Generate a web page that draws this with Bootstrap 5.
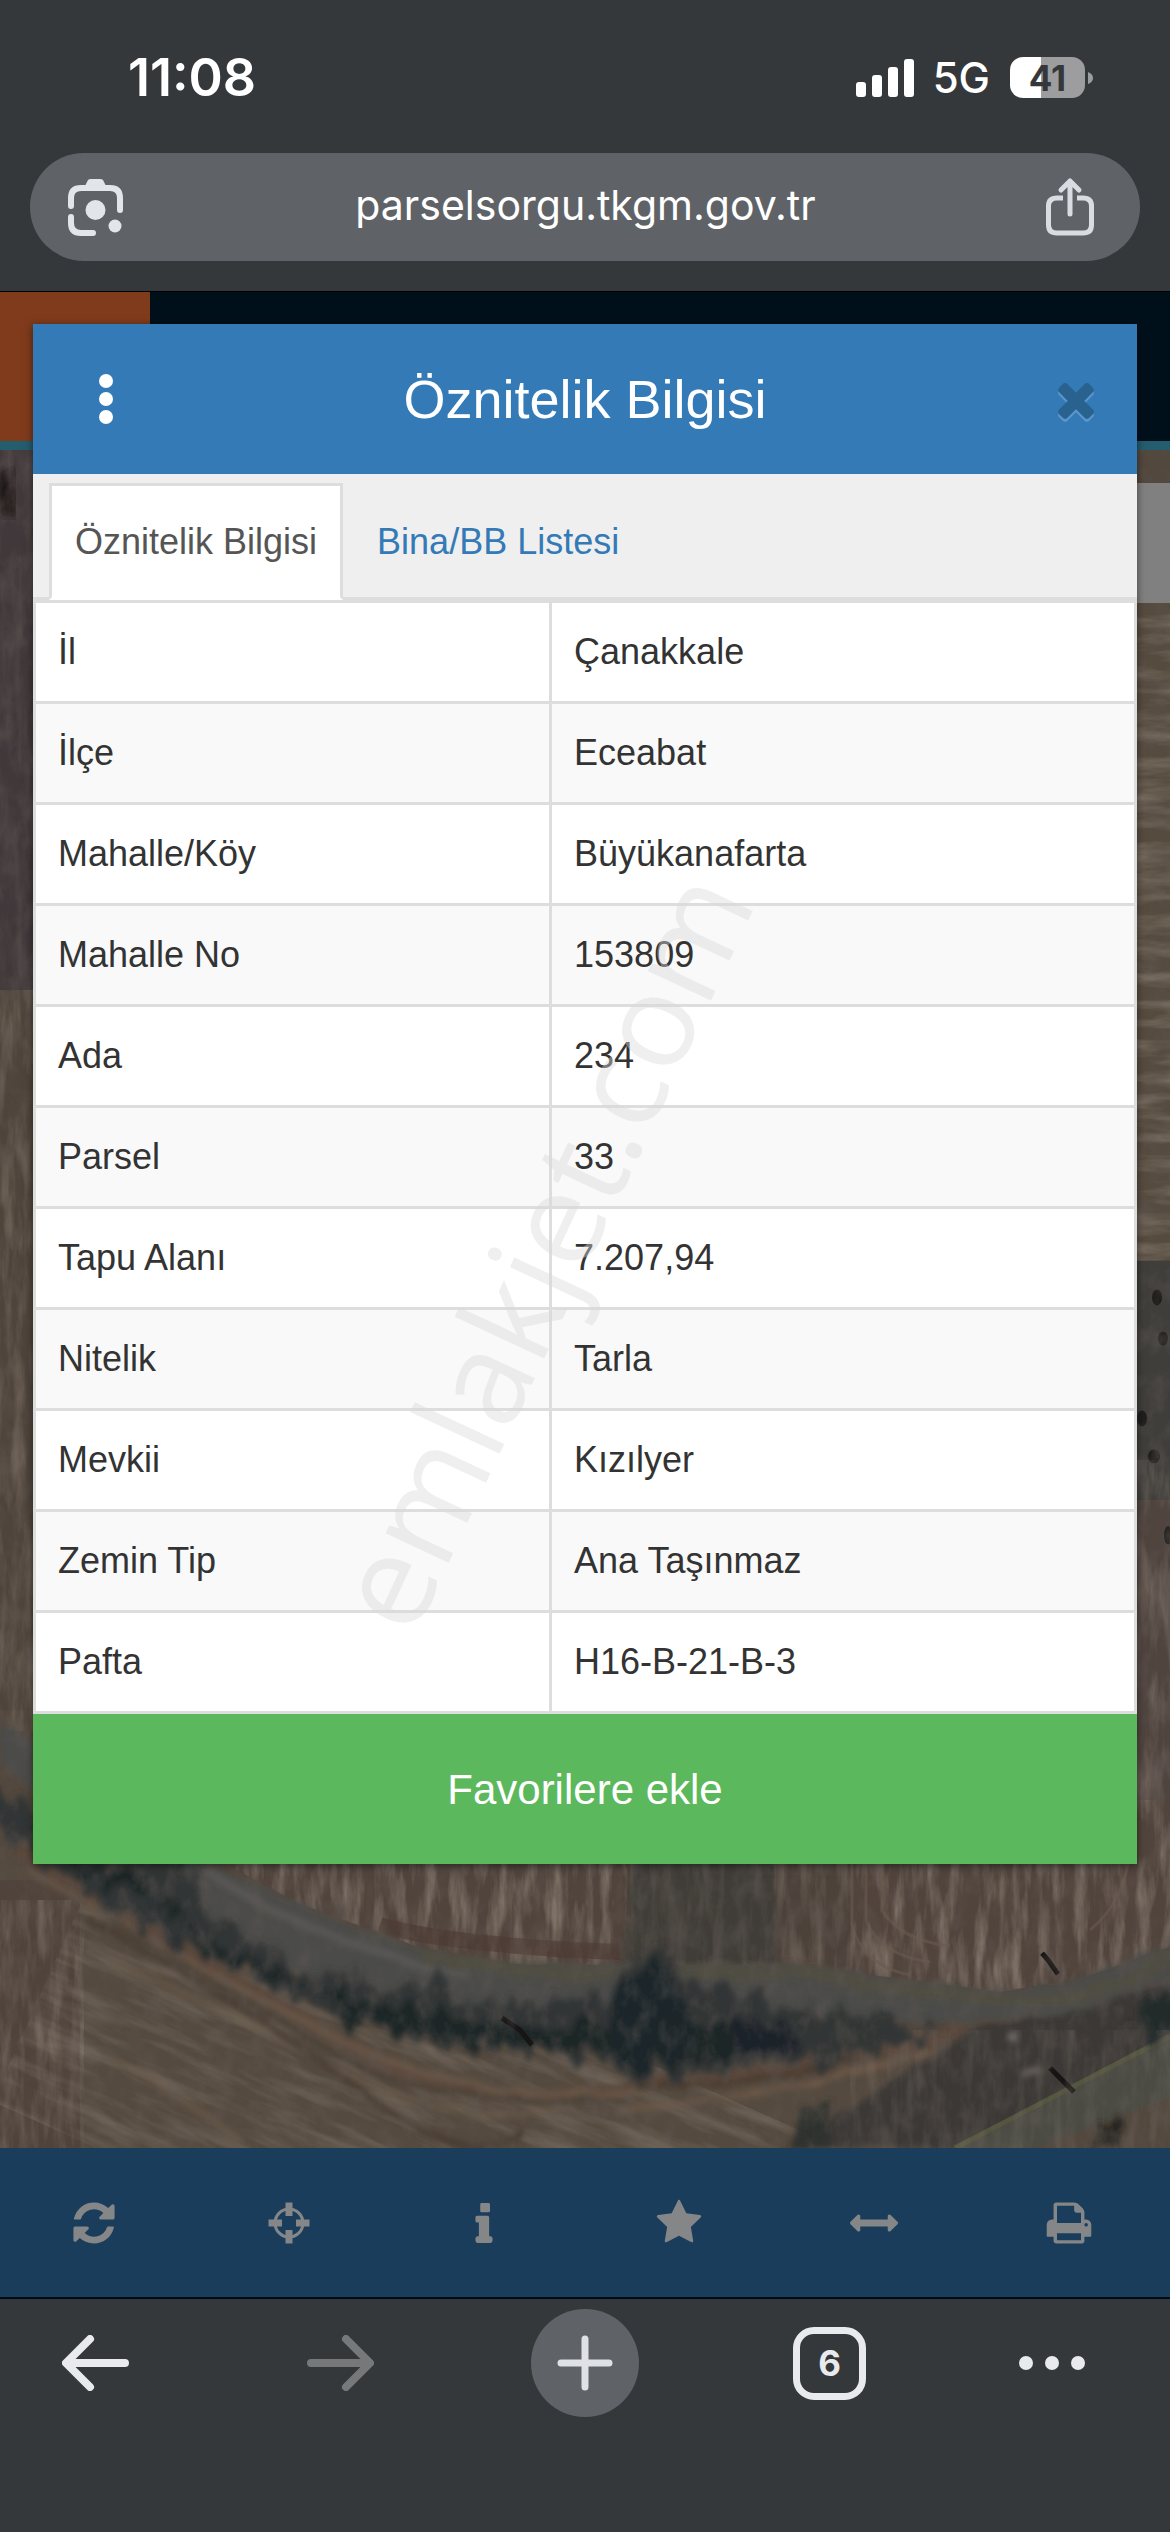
<!DOCTYPE html>
<html lang="tr">
<head>
<meta charset="utf-8">
<meta name="viewport" content="width=device-width, initial-scale=1">
<title>Parsel Sorgu - Öznitelik Bilgisi</title>
<link href="https://cdn.jsdelivr.net/npm/bootstrap@5.3.0/dist/css/bootstrap.min.css" rel="stylesheet">
<style>
  body { background: #35383b; font-family: "Liberation Sans", Arial, sans-serif; font-size: 36px; line-height: 48px; color: #333; }
  svg { display: block; flex: none; }
  .plain-btn { border: 0; padding: 0; background: none; color: inherit; display: flex; align-items: center; justify-content: center; }

  /* browser chrome */
  .phone-top, .browser-nav { font-family: Inter, sans-serif; color: #fff; }
  .status-row { height: 153px; padding: 2px 77px 0 128px; }
  .clock { font-size: 52px; font-weight: 600; }
  .net { font-size: 42px; font-weight: 500; margin: 0 20px 0 19px; }
  .battery { width: 75px; height: 41px; border-radius: 13px; font-size: 35px; font-weight: 700; color: #35383b; background: linear-gradient(90deg, #fff 42%, #9d9d9f 42%); }
  .address { height: 108px; margin: 0 30px 30px; padding: 0 45px 0 36px; border-radius: 54px; background: #5f6367; color: #e3e6e9; }
  .address input { border: 0; background: none; color: #fff; font-size: 41px; line-height: 48px; padding: 0 0 4px; text-align: center; min-width: 0; outline: 0; }

  /* page under the dialog */
  .stage { padding: 32px 33px 284px; border-top: 1px solid #000; overflow: hidden; isolation: isolate; }
  .map-art { position: absolute; inset: 0; width: 100%; height: 100%; z-index: -2; }
  .site-head { position: absolute; inset: 0 0 auto; height: 158px; z-index: -1; background: #00101a; border-bottom: 9px solid #245d6e; }
  .site-logo { width: 150px; height: 149px; background: #7f3b1b; }
  .map-control { position: absolute; right: 0; top: 191px; width: 60px; height: 120px; z-index: -1; background: #808080; }

  /* dialog */
  .dialog-box { background: #fff; box-shadow: 0 2px 8px 0 rgba(0,0,0,.5); }
  .dialog-head { height: 150px; background: #337ab7; color: #fff; }
  .dialog-head .plain-btn { width: 145px; align-self: stretch; }
  .dialog-head .close-x { justify-content: flex-end; padding-right: 34px; color: #29618f; filter: drop-shadow(0 3px 0 #5a96c9); }
  .dialog-head h1 { font-size: 54px; line-height: 60px; }
  .info-tabs { height: 126px; padding: 9px 16px 0; gap: 8px; background: #efefef; border-bottom: 3px solid #ddd; }
  .info-tabs .nav-link { height: 117px; margin-bottom: -3px; padding: 0 23px; border: 3px solid transparent; border-radius: 0; color: #337ab7; display: flex; align-items: center; }
  .info-tabs .nav-link.active { color: #555; background: #fff; border-color: #ddd #ddd #fff; }
  .info-table { border: 3px solid #ddd; border-bottom: 0; border-collapse: separate; border-spacing: 0; width: 100%; }
  .info-table th, .info-table td { height: 101px; padding: 0 22px; border-bottom: 3px solid #ddd; font-weight: 400; vertical-align: middle; }
  .info-table th { width: 47%; border-right: 3px solid #ddd; }
  .info-table tr:nth-child(even) { background: #f9f9f9; }
  .stamp { position: absolute; inset: 0; padding: 184px 90px 0 0; display: flex; align-items: center; justify-content: center; pointer-events: none; overflow: hidden; font-family: "Open Sans", sans-serif; font-size: 130px; color: rgba(216,216,216,.42); }
  .stamp span { transform: rotate(-65deg); }
  .fav-btn { height: 150px; border: 0; border-radius: 0; background: #5cb85c; color: #fff; font-size: 42px; }

  /* toolbars */
  .map-tools { height: 149px; margin: 0 4px 0 -4px; }
  .tools-wrap { background: #1a3d5b; color: #848688; border-bottom: 2px solid #000a1a; }
  .browser-nav { display: grid; grid-template-columns: 191fr 298fr 192fr 297fr 148fr 44fr; padding: 10px 0 115px; color: #e8eaed; }
  .new-tab { width: 108px; height: 108px; border-radius: 50%; background: #5f6367; color: #dfe1e5; }
  .tab-count { width: 73px; height: 73px; border: 7px solid #e8eaed; border-radius: 21px; font-size: 35px; font-weight: 700; }
</style>
<script src="https://cdn.jsdelivr.net/npm/bootstrap@5.3.0/dist/js/bootstrap.bundle.min.js"></script>
</head>
<body class="d-flex flex-column min-vh-100">

<header class="phone-top">
  <div class="status-row d-flex align-items-center">
    <span class="clock me-auto">11:08</span>
    <svg width="58" height="38" viewBox="0 0 58 38" fill="#fff"><rect y="23" width="10" height="15" rx="3"/><rect x="16" y="16" width="10" height="22" rx="3"/><rect x="32" y="8" width="10" height="30" rx="3"/><rect x="48" width="10" height="38" rx="3"/></svg>
    <span class="net">5G</span>
    <span class="battery d-flex align-items-center justify-content-center">41</span>
    <svg width="8" height="12" viewBox="0 0 8 12"><path d="M3 0Q8 2 8 6T3 12Z" fill="#9d9d9f"/></svg>
  </div>
  <div class="address d-flex align-items-center">
    <button class="plain-btn" aria-label="Google Lens">
      <svg width="60" height="60" viewBox="0 0 60 60" fill="none" stroke="#e3e6e9" stroke-width="6"><path d="M5 29V21Q5 11 15 11H44Q54 11 54 21V33" stroke-linecap="round"/><path d="M5 40V46Q5 56 15 56H27" stroke-linecap="round"/><path d="M18 11L22 3Q23 2 25 2H34Q36 2 37 3L41 11Z" fill="#e3e6e9" stroke="none"/><circle cx="29.500" cy="33" r="10" fill="#e3e6e9" stroke="none"/><circle cx="49" cy="49" r="6.500" fill="#e3e6e9" stroke="none"/></svg>
    </button>
    <input class="flex-grow-1" type="text" aria-label="Adres" value="parselsorgu.tkgm.gov.tr">
    <button class="plain-btn" aria-label="Paylaş">
      <svg width="50" height="60" viewBox="0 0 50 60" fill="none" stroke="#d9dce3" stroke-width="5" stroke-linecap="round" stroke-linejoin="round"><path d="M25 37V5M16 13L25 4L34 13"/><path stroke-linecap="butt" d="M18 21H12Q3.500 21 3.500 29V48Q3.500 56 12 56H38Q46.500 56 46.500 48V29Q46.500 21 38 21H32"/></svg>
    </button>
  </div>
</header>

<main class="stage position-relative">
  <svg class="map-art" viewBox="0 291 1170 1857" preserveAspectRatio="none" aria-hidden="true">
    <defs>
      <filter id="grainV" x="0" y="0" width="1" height="1"><feTurbulence type="fractalNoise" baseFrequency=".08 .016" numOctaves="5" seed="4"/><feColorMatrix values="0 0 0 0 .46  0 0 0 0 .39  0 0 0 0 .33  2.400 0 0 0 -1.000"/></filter>
      <filter id="grainH" x="0" y="0" width="1" height="1"><feTurbulence type="fractalNoise" baseFrequency=".012 .07" numOctaves="5" seed="9"/><feColorMatrix values="0 0 0 0 .46  0 0 0 0 .39  0 0 0 0 .33  2.400 0 0 0 -1.000"/></filter>
      <filter id="speck" x="0" y="0" width="1" height="1"><feTurbulence type="fractalNoise" baseFrequency=".06 .04" numOctaves="5" seed="2"/><feColorMatrix values="0 0 0 0 .12  0 0 0 0 .1  0 0 0 0 .09  2.400 0 0 0 -1.050"/></filter>
      <filter id="leaf" x="-.1" y="-.2" width="1.200" height="1.400"><feTurbulence type="fractalNoise" baseFrequency=".06 .018" numOctaves="3" seed="7" result="n"/><feDisplacementMap in="SourceGraphic" in2="n" scale="48" xChannelSelector="R" yChannelSelector="G"/><feGaussianBlur stdDeviation="3"/></filter>
      <filter id="soft"><feTurbulence type="fractalNoise" baseFrequency=".03" numOctaves="3" seed="3" result="n"/><feDisplacementMap in="SourceGraphic" in2="n" scale="12"/><feGaussianBlur stdDeviation="3"/></filter>
      <clipPath id="upper"><path d="M200 1850L298 1903L418 1947L522 1965H791L895 1978L1000 1992L1082 1978L1170 1947V1500H200Z"/></clipPath>
    </defs>
    <rect y="291" width="1170" height="1857" fill="#53483e"/>
    <!-- left and right margins of the map -->
    <rect y="430" width="60" height="560" fill="#40383a"/>
    <path d="M0 470h14v44H0z" fill="#1b1918" filter="url(#soft)"/>
    <rect y="990" width="60" height="720" fill="#4f443b"/>
    <rect x="1110" y="600" width="60" height="660" fill="#564b3f"/>
    <rect x="1110" y="1260" width="60" height="240" fill="#403e3b"/>
    <rect x="1110" y="1500" width="60" height="500" fill="#50443f"/>
    <g fill="#201e1d"><ellipse cx="1157" cy="1297" rx="5" ry="8"/><ellipse cx="1163" cy="1338" rx="5" ry="7"/><ellipse cx="1142" cy="1418" rx="5" ry="8"/><ellipse cx="1154" cy="1456" rx="6" ry="7"/><ellipse cx="1168" cy="1535" rx="4" ry="9"/></g>
    <rect x="1110" y="600" width="60" height="660" filter="url(#grainH)" opacity=".4"/>
    <rect y="430" width="60" height="560" filter="url(#grainV)" opacity=".12"/>
    <rect y="990" width="60" height="740" filter="url(#grainV)" opacity=".3"/>
    <rect x="1110" y="1460" width="60" height="440" filter="url(#grainV)" opacity=".3"/>
    <!-- southern field with plough lines -->
    <path d="M0 1790L119 1913L276 1980L343 2023L590 2053L716 2067L940 2030L1000 2010L900 2100L780 2148H0Z" fill="#554a3f"/>
    <path d="M0 1880H80V2148H0Z" fill="#50433b"/>
    <rect y="1900" width="84" height="248" filter="url(#grainV)" opacity=".3"/>
    <g transform="rotate(24 84 1900)"><rect x="84" y="1820" width="900" height="300" filter="url(#grainH)" opacity=".25"/></g>
    <g fill="none" stroke-linecap="round" filter="url(#soft)">
      <path d="M20 1850Q200 1960 340 2040T640 2085Q800 2075 960 2030" stroke="#5c4a3e" stroke-width="14"/>
      <path d="M30 1870Q180 1960 330 2035T640 2090" stroke="#6e5c4c" stroke-width="4"/>
      <path d="M110 1960Q230 2010 340 2070T560 2110" stroke="#6b5b4b" stroke-width="4"/>
      <path d="M90 1920Q240 2000 360 2090T520 2130" stroke="#463b32" stroke-width="6"/>
      <path d="M110 1920Q230 1990 330 2050T620 2100" stroke="#4a3f36" stroke-width="5"/>
      <path d="M110 2060Q160 2080 240 2140" stroke="#6b5b4b" stroke-width="4"/>
      <path d="M640 2088Q760 2082 860 2058" stroke="#493a2f" stroke-width="6"/>
      <path d="M620 2110Q760 2100 930 2050" stroke="#6f5a49" stroke-width="5"/>
    </g>
    <!-- fields north of the road -->
    <g clip-path="url(#upper)">
      <rect x="200" y="1800" width="970" height="200" fill="#51443c"/>
      <rect x="200" y="1800" width="970" height="200" filter="url(#grainV)" opacity=".45"/>
      <path d="M640 1800H776V1965H622Z" fill="#413c39" filter="url(#soft)"/>
      <path d="M776 1800H850V1985H776Z" fill="#4c413a" opacity=".7"/>
      <path d="M640 1855H850V1970H625Z" filter="url(#grainV)" opacity=".15"/>
      <path d="M852 1850V1925Q862 1965 910 1975M866 1850V1920Q880 1955 930 1962M882 1850V1910Q900 1940 950 1946M1130 1850Q1126 1900 1090 1930" fill="none" stroke="#6b5a4e" stroke-width="3" opacity=".6"/>
      <path d="M380 1925Q450 1945 620 1952" fill="none" stroke="#4b3932" stroke-width="16" opacity=".6"/>
    </g>
    <!-- scrub and lane in the south east -->
    <path d="M790 2148L895 2080L970 2030L1067 2008L1170 1983V2040L1080 2085L970 2148Z" fill="#3b3734" filter="url(#soft)"/>
    <path d="M955 2150L1170 2036V2098L1030 2150Z" fill="#4b4b43"/>
    <path d="M955 2148L1170 2036" stroke="#54553f" stroke-width="5"/>
    <path d="M790 2148L800 2110L832 2100L828 2148Z" fill="#2f332e" filter="url(#soft)"/>
    <g fill="#22241f" filter="url(#leaf)"><ellipse cx="1108" cy="2132" rx="12" ry="16"/><path d="M1140 2000L1180 1985V2040L1140 2050Z" fill="#232a29"/></g>
    <rect x="850" y="2030" width="320" height="118" filter="url(#grainV)" opacity=".15"/>
    <!-- road -->
    <path d="M0 1722L33 1740L200 1860L298 1903Q360 1930 418 1947T522 1965H791L895 1978L1000 1992L1082 1978L1170 1947V1983L1067 2012L970 2023L821 2022H552L418 2010L336 1985L194 1940L130 1880L33 1790L0 1762Z" fill="#4c4b48" filter="url(#soft)"/>
    <path d="M205 1868Q250 1905 330 1935T470 1975" fill="none" stroke="#5d5c5a" stroke-width="8" opacity=".8" filter="url(#soft)"/>
    <path d="M420 1955Q500 1975 640 1973H800Q900 1990 1000 2000T1170 1955" fill="none" stroke="#504e43" stroke-width="14" filter="url(#soft)"/>
    <!-- tree line -->
    <g filter="url(#leaf)">
      <path d="M-20 1775L33 1808L70 1850H185L200 1905L270 1950L345 1985L362 1960L385 1990L440 1980L470 2005L560 2000L600 1996L628 1960H672L700 1990L740 1990L790 2010L900 2018L940 2035L821 2062L716 2070L627 2078L590 2056L430 2045L350 2030L276 1988L190 1955L119 1918L50 1870L-20 1810Z" fill="#303535"/>
      <path d="M60 1860L150 1900L200 1955L330 1995L352 2030L430 2040L590 2050L640 2070L800 2045L790 2025H480L350 2000L200 1940L130 1870Z" fill="#1f2626"/>
      <path d="M610 1985L650 1966L690 2000L700 2050L610 2072Z" fill="#1f2829"/>
      <path d="M730 2022H800V2050L740 2055Z" fill="#1a212a"/>
    </g>
    <path d="M502 2018L520 2030L532 2045M1042 1953L1048 1960L1058 1974M1050 2068L1074 2092" stroke="#171514" stroke-width="5" fill="none"/>
    <path d="M1010 2030l8 6-2 8-8-4zM1022 2078l14-12 6 4-16 10z" fill="#74706d" filter="url(#soft)"/>
    <rect y="440" width="1170" height="1708" filter="url(#speck)" opacity=".4"/>
  </svg>
  <div class="site-head"><div class="site-logo"></div></div>
  <div class="map-control"></div>

  <section class="dialog-box" role="dialog" aria-labelledby="dialogTitle">
    <div class="dialog-head d-flex align-items-center">
      <button class="plain-btn" aria-label="Menü"><svg width="16" height="52" viewBox="0 0 16 52" fill="#fff"><circle cx="8" cy="8" r="7"/><circle cx="8" cy="26" r="7"/><circle cx="8" cy="44" r="7"/></svg></button>
      <h1 class="flex-grow-1 text-center fw-normal mb-0" id="dialogTitle">Öznitelik Bilgisi</h1>
      <button class="plain-btn close-x" aria-label="Kapat"><svg width="54" height="54" viewBox="0 0 1792 1792" fill="currentColor"><path d="M1490 1322q0 40-28 68l-136 136q-28 28-68 28t-68-28l-294-294-294 294q-28 28-68 28t-68-28l-136-136q-28-28-28-68t28-68l294-294-294-294q-28-28-28-68t28-68l136-136q28-28 68-28t68 28l294 294 294-294q28-28 68-28t68 28l136 136q28 28 28 68t-28 68l-294 294 294 294q28 28 28 68z"/></svg></button>
    </div>
    <ul class="nav nav-tabs info-tabs">
      <li class="nav-item"><a class="nav-link active" href="#" aria-current="page">Öznitelik Bilgisi</a></li>
      <li class="nav-item"><a class="nav-link" href="#">Bina/BB Listesi</a></li>
    </ul>
    <div class="position-relative">
      <table class="info-table">
        <tbody>
          <tr><th scope="row">İl</th><td>Çanakkale</td></tr>
          <tr><th scope="row">İlçe</th><td>Eceabat</td></tr>
          <tr><th scope="row">Mahalle/Köy</th><td>Büyükanafarta</td></tr>
          <tr><th scope="row">Mahalle No</th><td>153809</td></tr>
          <tr><th scope="row">Ada</th><td>234</td></tr>
          <tr><th scope="row">Parsel</th><td>33</td></tr>
          <tr><th scope="row">Tapu Alanı</th><td>7.207,94</td></tr>
          <tr><th scope="row">Nitelik</th><td>Tarla</td></tr>
          <tr><th scope="row">Mevkii</th><td>Kızılyer</td></tr>
          <tr><th scope="row">Zemin Tip</th><td>Ana Taşınmaz</td></tr>
          <tr><th scope="row">Pafta</th><td>H16-B-21-B-3</td></tr>
        </tbody>
      </table>
      <div class="stamp"><span>emlakjet.com</span></div>
    </div>
    <button class="btn fav-btn w-100">Favorilere ekle</button>
  </section>
</main>

<div class="tools-wrap overflow-hidden">
  <nav class="map-tools row row-cols-6 g-0">
    <button class="plain-btn col" aria-label="Yenile"><svg width="48" height="48" viewBox="0 0 1792 1792" fill="currentColor"><path d="M1639 1056q0 5-1 7-64 268-268 434.500t-478 166.500q-146 0-282.500-55t-243.500-157l-129 129q-19 19-45 19t-45-19-19-45v-448q0-26 19-45t45-19h448q26 0 45 19t19 45-19 45l-137 137q71 66 161 102t187 36q134 0 250-65t186-179q11-17 53-117 8-23 30-23h192q13 0 22.500 9.500t9.500 22.500zm25-800v448q0 26-19 45t-45 19h-448q-26 0-45-19t-19-45 19-45l138-138q-148-137-349-137-134 0-250 65t-186 179q-11 17-53 117-8 23-30 23h-199q-13 0-22.500-9.500t-9.500-22.500v-7q65-268 270-434.500t480-166.500q146 0 284 55.500t245 156.500l130-129q19-19 45-19t45 19 19 45z"/></svg></button>
    <button class="plain-btn col" aria-label="Konum"><svg width="48" height="48" viewBox="0 0 48 48" fill="none" stroke="currentColor"><circle cx="24" cy="24" r="14" stroke-width="3"/><path stroke-width="7" d="M24 3.500V17M24 31V44.500M3.500 24H17M31 24H44.500"/></svg></button>
    <button class="plain-btn col" aria-label="Bilgi"><svg width="48" height="48" viewBox="0 0 1792 1792" fill="currentColor"><path d="M1216 1472v64q0 26-19 64t-45 38h-512q-26 0-45-38t-19-64v-64q0-26 19-45t45-38h64v-512h-64q-26 0-45-19t-19-45v-128q0-26 19-45t45-19h384q26 0 45 19t19 45v704h64q26 0 45 38t19 45zM1120 192v256q0 45-64 45h-256q-45 0-45-45v-256q0-45 45-45h256q64 0 64 45z"/></svg></button>
    <button class="plain-btn col" aria-label="Favoriler"><svg width="48" height="48" viewBox="0 0 1792 1792" fill="currentColor"><path d="M1728 647q0 22-26 48l-363 354 86 500q1 7 1 20 0 21-10.500 35.500t-30.500 14.500q-19 0-40-12l-449-236-449 236q-22 12-40 12-21 0-31.500-14.500t-10.500-35.500q0-6 2-20l86-500-364-354q-25-27-25-48 0-37 56-46l502-73 225-455q19-41 49-41t49 41l225 455 502 73q56 9 56 46z"/></svg></button>
    <button class="plain-btn col" aria-label="Ölçüm"><svg width="48" height="48" viewBox="0 0 1792 1792" fill="currentColor"><path d="M1792 896q0 26-19 45l-256 256q-19 19-45 19t-45-19-19-45v-128h-1024v128q0 26-19 45t-45 19-45-19l-256-256q-19-19-19-45t19-45l256-256q19-19 45-19t45 19 19 45v128h1024v-128q0-26 19-45t45-19 45 19l256 256q19 19 19 45z"/></svg></button>
    <button class="plain-btn col" aria-label="Yazdır"><svg width="48" height="48" viewBox="0 0 1792 1792" fill="currentColor"><path d="M448 1536h896v-256h-896v256zm0-640h896v-384h-160q-40 0-68-28t-28-68v-160h-640v640zm1152 64q0-26-19-45t-45-19-45 19-19 45 19 45 45 19 45-19 19-45zm128 0v416q0 13-9.500 22.500t-22.500 9.500h-224v160q0 40-28 68t-68 28h-960q-40 0-68-28t-28-68v-160h-224q-13 0-22.500-9.500t-9.500-22.500v-416q0-79 56.500-135.500t135.500-56.500h64v-544q0-40 28-68t68-28h672q40 0 88 20t76 48l152 152q28 28 48 76t20 88v256h64q79 0 135.500 56.500t56.500 135.500z"/></svg></button>
  </nav>
</div>

<nav class="browser-nav">
  <button class="plain-btn" aria-label="Geri"><svg width="68" height="56" viewBox="0 0 68 56" fill="none" stroke="currentColor" stroke-width="8" stroke-linecap="round" stroke-linejoin="round"><path d="M63 28H5M28 4L4 28L28 52"/></svg></button>
  <button class="plain-btn" aria-label="İleri"><svg width="68" height="56" viewBox="0 0 68 56" fill="none" stroke="#77787a" stroke-width="8" stroke-linecap="round" stroke-linejoin="round"><path d="M5 28H63M40 4L64 28L40 52"/></svg></button>
  <button class="plain-btn new-tab mx-auto" aria-label="Yeni sekme"><svg width="56" height="56" viewBox="0 0 56 56" stroke="currentColor" stroke-width="7" stroke-linecap="round"><path d="M28 4V52M4 28H52"/></svg></button>
  <button class="plain-btn" aria-label="Sekmeler"><span class="tab-count d-flex align-items-center justify-content-center">6</span></button>
  <button class="plain-btn" aria-label="Diğer"><svg width="68" height="16" viewBox="0 0 68 16" fill="currentColor"><circle cx="8" cy="8" r="7"/><circle cx="34" cy="8" r="7"/><circle cx="60" cy="8" r="7"/></svg></button>
</nav>
</body>
</html>
